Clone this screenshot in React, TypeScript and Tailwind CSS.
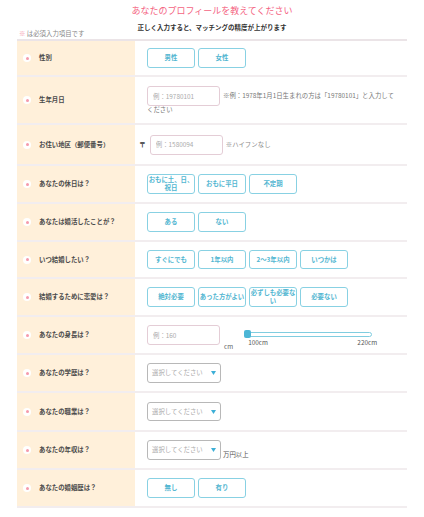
import type { ReactNode } from 'react';

function Dot() {
  return (
    <span className="w-[8px] h-[8px] rounded-full bg-white flex items-center justify-center shrink-0">
      <span className="w-[3px] h-[3px] rounded-full bg-[#f59aac]" />
    </span>
  );
}

function Row({
  label,
  h,
  children,
  pad = 'pl-[12px]',
}: {
  label: string;
  h: string;
  children: ReactNode;
  pad?: string;
}) {
  return (
    <div className={`flex border-b-2 border-[#f2edef] ${h}`}>
      <div className="w-[118px] shrink-0 bg-[#fff0da] flex items-center pl-[6px]">
        <Dot />
        <span className="ml-[8px] text-[6.4px] leading-[8px] font-bold text-[#4a4a4a]">{label}</span>
      </div>
      <div className={`flex-1 flex items-center ${pad}`}>{children}</div>
    </div>
  );
}

// "\n" in a label forces the same break as the original page
function Choice({ items }: { items: string[] }) {
  return (
    <div className="flex gap-[3px]">
      {items.map((t) => (
        <button
          key={t}
          type="button"
          className="w-[48px] h-[19.5px] border border-[#88d1e3] rounded-[3px] bg-white px-0 whitespace-pre-line text-[6.4px] leading-[8px] font-bold text-[#52b6d1]"
        >
          {t}
        </button>
      ))}
    </div>
  );
}

function TextBox({ placeholder }: { placeholder: string }) {
  return (
    <input
      type="text"
      placeholder={placeholder}
      className="w-[73px] h-[20px] border border-[#e4cdd6] rounded-[3px] pl-[5px] text-[6.4px] text-[#555] placeholder:text-[#aaa] outline-none align-middle"
    />
  );
}

function SelectBox() {
  return (
    <div className="w-[74px] h-[19.5px] border-[1.5px] border-[#b8b8b8] rounded-[3px] flex items-center justify-between pl-[4px] pr-[4px] bg-white">
      <span className="text-[6.4px] leading-[8px] text-[#aaa]">選択してください</span>
      <svg width="5" height="4" viewBox="0 0 5 4">
        <polygon points="0,0 5,0 2.5,4" fill="#3cafd7" />
      </svg>
    </div>
  );
}

export default function App() {
  return (
    <div className="w-[424px] h-[517px] bg-white font-['Noto_Sans_CJK_JP','Noto_Sans',sans-serif] pt-[5px]">
      <h1 className="text-center text-[9px] leading-[12px] text-[#f4637f]">あなたのプロフィールを教えてください</h1>
      <p className="mt-[6px] text-center text-[6.5px] leading-[8px] font-bold text-[#333]">
        正しく入力すると、マッチングの精度が上がります
      </p>
      <p className="-mt-[1px] pl-[19px] text-[6.4px] leading-[8px] text-[#888]">
        <span className="text-[#f59aac]">※</span> は必須入力項目です
      </p>

      <div className="mt-[1px] mx-[17px] border-t-2 border-[#ebe4e7]">
        <Row label="性別" h="h-[36px]">
          <Choice items={['男性', '女性']} />
        </Row>

        <Row label="生年月日" h="h-[48px]">
          <div className="text-[6.4px] leading-[8px] text-[#777] pr-[2px]">
            <TextBox placeholder="例：19780101" />
            <span className="ml-[3px]">※例：1978年1月1日生まれの方は「19780101」と入力して</span>
            <br />
            ください
          </div>
        </Row>

        <Row label="お住い地区（郵便番号）" h="h-[41px]" pad="pl-[4px]">
          <span className="text-[6.8px] font-bold text-[#333]">〒</span>
          <span className="ml-[4px] flex">
            <TextBox placeholder="例：1580094" />
          </span>
          <span className="ml-[3px] text-[6.4px] text-[#888]">※ハイフンなし</span>
        </Row>

        <Row label="あなたの休日は？" h="h-[38px]">
          <Choice items={['おもに土、日、\n祝日', 'おもに平日', '不定期']} />
        </Row>

        <Row label="あなたは婚活したことが？" h="h-[38px]">
          <Choice items={['ある', 'ない']} />
        </Row>

        <Row label="いつ結婚したい？" h="h-[37px]">
          <Choice items={['すぐにでも', '1年以内', '2〜3年以内', 'いつかは']} />
        </Row>

        <Row label="結婚するために恋愛は？" h="h-[38px]">
          <Choice items={['絶対必要', 'あった方がよい', '必ずしも必要な\nい', '必要ない']} />
        </Row>

        <Row label="あなたの身長は？" h="h-[38px]">
          <TextBox placeholder="例：160" />
          <span className="self-end mb-[2px] ml-[4px] text-[6.4px] leading-[8px] text-[#666]">cm</span>
          <div className="ml-[11px] mt-[7px] w-[128px]">
            <div className="relative h-[8px] flex items-center">
              <div className="w-full h-[5px] rounded-full border border-[#80cde0] bg-white" />
              <span className="absolute left-0 top-0 w-[7px] h-[8px] rounded-[2px] bg-[#4cb6d6]" />
            </div>
            <div className="mt-[1px] -mr-[5px] pl-[4px] flex justify-between text-[6.4px] leading-[8px] text-[#555]">
              <span>100cm</span>
              <span>220cm</span>
            </div>
          </div>
        </Row>

        <Row label="あなたの学歴は？" h="h-[38px]">
          <SelectBox />
        </Row>

        <Row label="あなたの職業は？" h="h-[39px]">
          <SelectBox />
        </Row>

        <Row label="あなたの年収は？" h="h-[38px]">
          <SelectBox />
          <span className="self-end mb-[9px] ml-[2px] text-[6.4px] leading-[8px] text-[#555]">万円以上</span>
        </Row>

        <Row label="あなたの婚姻歴は？" h="h-[38px]">
          <Choice items={['無し', '有り']} />
        </Row>
      </div>
    </div>
  );
}
